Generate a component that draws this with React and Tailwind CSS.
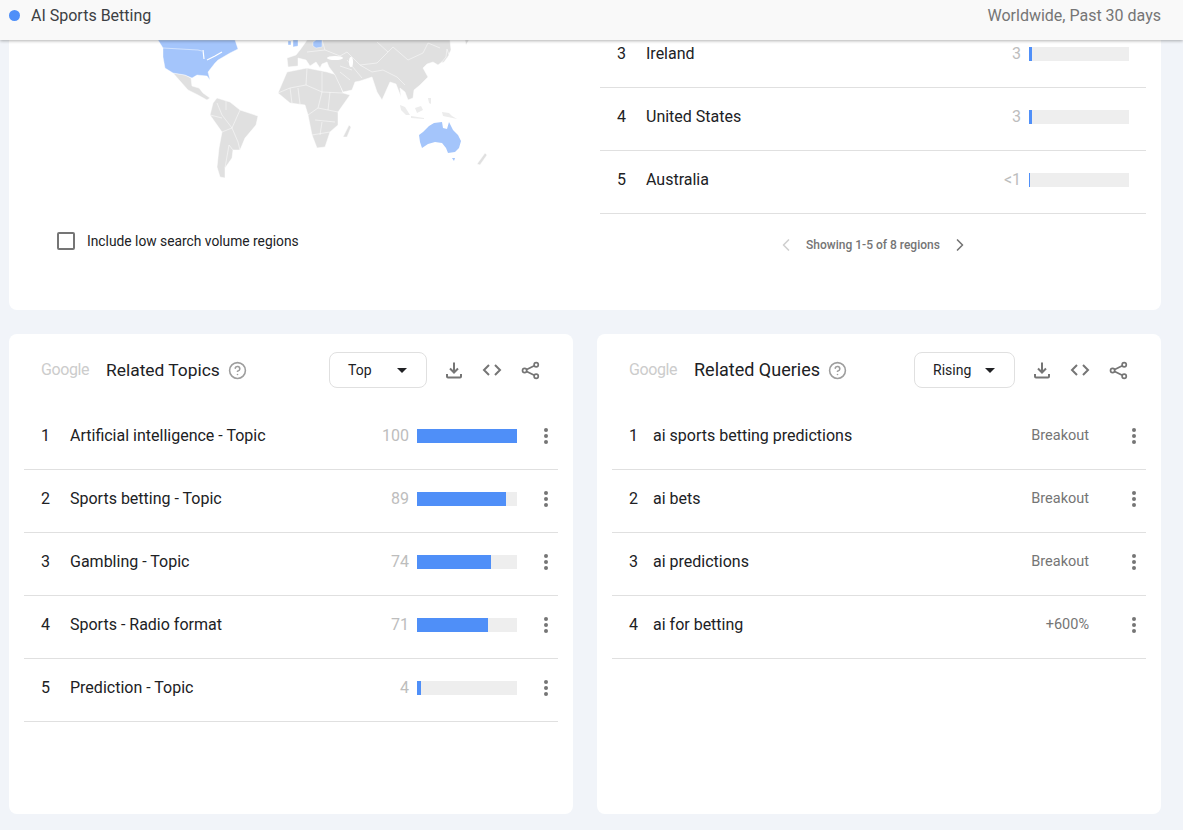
import { ChevronLeft, ChevronRight, CircleHelp } from "lucide-react";

const regions = [
  { rank: 3, name: "Ireland", value: "3", pct: 3 },
  { rank: 4, name: "United States", value: "3", pct: 3 },
  { rank: 5, name: "Australia", value: "<1", pct: 1 },
];

const topics = [
  { rank: 1, name: "Artificial intelligence - Topic", value: "100", pct: 100 },
  { rank: 2, name: "Sports betting - Topic", value: "89", pct: 89 },
  { rank: 3, name: "Gambling - Topic", value: "74", pct: 74 },
  { rank: 4, name: "Sports - Radio format", value: "71", pct: 71 },
  { rank: 5, name: "Prediction - Topic", value: "4", pct: 4 },
];

const queries = [
  { rank: 1, name: "ai sports betting predictions", value: "Breakout" },
  { rank: 2, name: "ai bets", value: "Breakout" },
  { rank: 3, name: "ai predictions", value: "Breakout" },
  { rank: 4, name: "ai for betting", value: "+600%" },
];

const WorldMap = () => (
  <svg viewBox="130 40 380 150" className="block w-[380px] h-[150px] ml-[121px]">
    <g fill="#e0e0e0" stroke="#ffffff" strokeWidth="0.5" strokeLinejoin="round">
      {/* central and south america */}
      <path d="M173 73L185 75L191 78L192 86L199 88L203 93L210 98L207 100L198 95L188 90L180 81Z" />
      <path d="M217 98L230 102L240 110L258 116L256 125L245 138L240 150L233 150L232 158L225 168L225 178L220 177L217 167L219 148L222 132L210 115L213 103Z" />
      <path d="M222 132L232 128L240 110M232 128L238 142L240 150M217 103L222 115L232 128M225 168L229 145L233 150M210 115L222 118M226 100L226 110" fill="none" />
      {/* africa */}
      <path d="M287 72L307 68L327 72L337 75L343 93L350 95L338 112L338 125L330 132L325 147L317 148L312 135L308 115L305 105L290 103L278 93Z" />
      <path d="M307 68L306 85L290 88L278 93M306 85L322 92L343 93M322 72L322 92L318 108L308 115M318 108L338 112M312 135L330 132M315 120L335 122M290 88L292 103M298 88L300 104M330 92L328 110M322 122L320 135" fill="none" />
      <path d="M345 133L349 125L351 127L347 137L343 137Z" />
      {/* europe and asia */}
      <path d="M450 40L451 50L447 58L438 65L433 62L427 64L423 68L428 77L420 85L414 90L413 98L408 100L405 92L400 88L401 97L396 84L390 82L382 100L377 92L372 77L360 81L355 82L352 90L343 92L335 75L329 67L327 62L322 64L320 68L316 62L310 66L306 60L298 58L298 66L288 67L287 58L296 55L300 50L305 43L307 40Z" />
      <path d="M347 52L360 65L377 63L388 52L377 42M393 47L408 60L423 53L428 43L440 48M372 72L383 70L397 77M347 60L362 78M360 65L372 72M307 52L325 50L340 56L347 52M325 50L322 40M397 77L405 85M388 52L393 47M340 66L352 70M340 72L350 80" fill="none" />
      <path d="M447 49L449 55L444 62L441 63L446 57Z" />
      <path d="M465 40L469 40L466 45Z" />
      <path d="M477 164L485 153L487 155L480 165Z" />
    </g>
    <g fill="#ececec">
      <path d="M400 105L405 107L410 115L406 115L401 110Z" />
      <path d="M415 108L421 106L423 110L417 113Z" />
      <path d="M411 116L424 118L424 119L411 118Z" />
      <path d="M442 112L449 113L452 116L457 119L448 117L443 116Z" />
      <path d="M428 98L431 98L431 104L429 103Z" />
    </g>
    <ellipse cx="335" cy="58" rx="8" ry="2" fill="#ffffff" />
    <ellipse cx="351" cy="62" rx="2" ry="5" fill="#ffffff" />
    <g fill="#a4c5fb" stroke="#ffffff" strokeWidth="0.4">
      {/* us and canada */}
      <path d="M158 40L235 40L238 49L230 53L218 60L215 63L208 72L210 80L207 76L197 75L192 78L185 75L173 73L165 68L163 57L163 48Z" />
      <path d="M288 41L291 41L291 45L288 45Z" />
      <path d="M293 40L298 40L298 46L293 47Z" />
      <path d="M313 42L316 40L322 40L322 47L316 48L313 46Z" />
      {/* australia */}
      <path d="M419 135L423 132L429 126L434 123L442 122L443 128L447 129L449 122L453 130L458 135L461 141L459 148L455 152L448 153L446 148L442 143L435 142L428 144L422 148L420 142Z" stroke="none" />
      <path d="M452 158L455 158L454 161Z" stroke="none" />
    </g>
    <path d="M163 48L198 50L202 51" fill="none" stroke="#ffffff" strokeWidth="0.5" />
    <path d="M203 50L204 59M207 60L215 56L222 52" fill="none" stroke="#ffffff" strokeWidth="1.2" />
  </svg>
);

const DownloadIcon = () => (
  <svg viewBox="0 0 18 18" className="w-[18px] h-[18px]" fill="none" stroke="#757575" strokeWidth="2">
    <path d="M9 1.5V11M5 7.5L9 11.5L13 7.5" />
    <path d="M2 13V15.5C2 16 2.5 16.5 3 16.5H15C15.5 16.5 16 16 16 15.5V13" />
  </svg>
);

const CodeIcon = () => (
  <svg viewBox="0 0 20 14" className="w-5 h-[14px]" fill="none" stroke="#757575" strokeWidth="2">
    <path d="M7 2L2 7L7 12M13 2L18 7L13 12" />
  </svg>
);

const ShareIcon = () => (
  <svg viewBox="0 0 20 20" className="w-[19px] h-[19px]" fill="none" stroke="#757575" strokeWidth="1.8">
    <circle cx="16" cy="4" r="2.2" />
    <circle cx="3.8" cy="10" r="2.2" />
    <circle cx="16" cy="16" r="2.2" />
    <path d="M6 9L14 5M6 11L14 15" />
  </svg>
);

const Kebab = () => (
  <div className="w-[4px] flex flex-col gap-[2px]">
    <span className="w-[4px] h-[4px] rounded-full bg-[#757575]" />
    <span className="w-[4px] h-[4px] rounded-full bg-[#757575]" />
    <span className="w-[4px] h-[4px] rounded-full bg-[#757575]" />
  </div>
);

const Bar = ({ value, pct }) => (
  <div className="flex items-center">
    <span className="w-10 text-right text-base text-[#bdbdbd]">{value}</span>
    <div className="ml-2 w-[100px] h-[14px] bg-[#eeeeee]">
      <div className="h-full bg-[#4f8ff8]" style={{ width: `${pct}%` }} />
    </div>
  </div>
);

const CardHeader = ({ title, mode, selectWidth, titleSize }) => (
  <div className="flex items-center h-9 mt-[18px] pl-[32px]">
    <span className="w-[65px] text-base tracking-[-0.4px] text-[#cccccc]">Google</span>
    <span className={`${titleSize} text-[#202124]`}>{title}</span>
    <CircleHelp className="w-[19px] h-[19px] text-[#9e9e9e] ml-2" />
    <div className="flex-1" />
    <div className={`${selectWidth} h-9 border border-[#e0e0e0] rounded-lg flex items-center justify-between pl-[18px] pr-[19px] text-sm text-[#202124]`}>
      {mode}
      <span className="w-0 h-0 border-x-[5px] border-x-transparent border-t-[5px] border-t-[#202124]" />
    </div>
    <div className="flex items-center ml-[18px] mr-[33px] gap-[19px]">
      <DownloadIcon />
      <CodeIcon />
      <ShareIcon />
    </div>
  </div>
);

const ListRow = ({ rank, name, rankWidth = "w-[46px]", children }) => (
  <div className="h-[63px] pb-1 border-b border-[#e0e0e0] flex items-center text-base text-[#202124]">
    <span className={`${rankWidth} pl-[17px]`}>{rank}</span>
    <span className="flex-1">{name}</span>
    {children}
  </div>
);

export default function App() {
  return (
    <div className="h-[830px] overflow-hidden bg-[#f1f4f9] font-['Roboto',sans-serif]">
      <header className="relative z-10 h-10 pb-[9px] bg-[#f9f9f9] shadow-[0_1px_3px_rgba(0,0,0,0.3)] flex items-center justify-between pl-[9px] pr-[22px] text-base">
        <div className="flex items-center gap-[11px] text-[#3c4043]">
          <span className="w-[11px] h-[11px] rounded-full bg-[#4f8ff8]" />
          AI Sports Betting
        </div>
        <span className="text-[#757575]">Worldwide, Past 30 days</span>
      </header>

      <div className="pl-[9px] pr-[22px]">
        <section className="h-[270px] bg-white rounded-b-lg flex overflow-hidden">
          <div className="w-[591px]">
            <WorldMap />
            <label className="flex items-center mt-[41px] ml-[48px] text-[13.8px] text-[#202124]">
              <span className="w-[18px] h-[18px] border-2 border-[#757575] rounded-[2px] mr-3" />
              Include low search volume regions
            </label>
          </div>
          <div className="w-[546px] -mt-[15px]">
            {regions.map((r) => (
              <ListRow key={r.rank} {...r}>
                <div className="mr-[17px]">
                  <Bar value={r.value} pct={r.pct} />
                </div>
              </ListRow>
            ))}
            <div className="flex items-center justify-center h-[61px] text-xs font-medium text-[#757575]">
              <ChevronLeft className="w-5 h-5 text-[#d0d0d0] mr-[10px]" />
              Showing 1-5 of 8 regions
              <ChevronRight className="w-5 h-5 text-[#757575] ml-[10px]" />
            </div>
          </div>
        </section>

        <div className="grid grid-cols-2 gap-6 mt-6">
          <section className="h-[480px] bg-white rounded-lg">
            <CardHeader title="Related Topics" mode="Top" selectWidth="w-[98px]" titleSize="text-[17.4px]" />
            <div className="mx-[15px] mt-[19px]">
              {topics.map((t) => (
                <ListRow key={t.rank} {...t}>
                  <Bar value={t.value} pct={t.pct} />
                  <div className="ml-[27px] mr-[10px]">
                    <Kebab />
                  </div>
                </ListRow>
              ))}
            </div>
          </section>

          <section className="h-[480px] bg-white rounded-lg">
            <CardHeader title="Related Queries" mode="Rising" selectWidth="w-[101px]" titleSize="text-lg" />
            <div className="mx-[15px] mt-[19px]">
              {queries.map((q) => (
                <ListRow key={q.rank} rank={q.rank} name={q.name} rankWidth="w-[41px]">
                  <span className="text-[14.5px] text-[#757575]">{q.value}</span>
                  <div className="ml-[43px] mr-[10px]">
                    <Kebab />
                  </div>
                </ListRow>
              ))}
            </div>
          </section>
        </div>
      </div>
    </div>
  );
}
